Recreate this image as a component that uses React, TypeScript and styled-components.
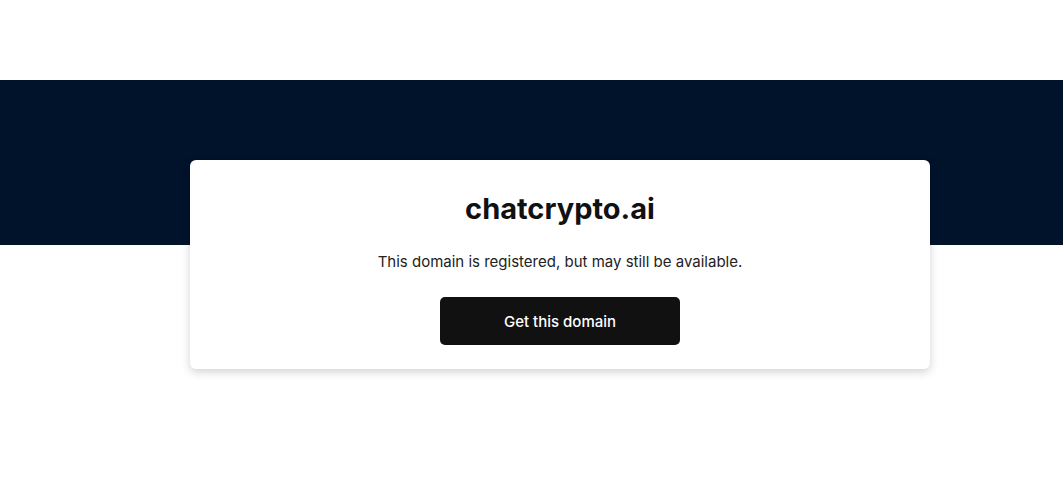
import styled, { createGlobalStyle } from 'styled-components'

const GlobalStyle = createGlobalStyle`
  html, body {
    margin: 0;
    padding: 0;
    background: #fff;
    font-family: Inter, "Noto Sans", sans-serif;
    color: #111;
  }
`

// white header strip, dark hero band, then white again; card sits over the band edge
const Page = styled.main`
  min-height: 485px;
  box-sizing: border-box;
  padding: 160px 0 40px 57px;
  background: linear-gradient(
    to bottom,
    #fff 0,
    #fff 80px,
    #00132b 80px,
    #00132b 245px,
    #fff 245px
  );
  display: flex;
  justify-content: center;
  align-items: flex-start;
`

const Card = styled.article`
  width: 740px;
  box-sizing: border-box;
  background: #fff;
  border-radius: 6px;
  padding: 29px 24px 24px;
  box-shadow: 0 3px 10px rgba(0, 0, 0, 0.18);
  display: flex;
  flex-direction: column;
  align-items: center;
  text-align: center;
`

const Title = styled.h1`
  margin: 0;
  font-size: 29px;
  line-height: 40px;
  font-weight: 700;
  color: #111;
`

const Subtitle = styled.p`
  margin: 22px 0 0;
  font-size: 15px;
  line-height: 22px;
  color: #222;
`

const Button = styled.a`
  margin-top: 24px;
  width: 240px;
  height: 48px;
  display: flex;
  align-items: center;
  justify-content: center;
  background: #111;
  color: #fff;
  border-radius: 5px;
  font-size: 15px;
  font-weight: 500;
  text-decoration: none;
  cursor: pointer;
`

export default function App() {
  return (
    <>
      <GlobalStyle />
      <Page>
        <Card>
          <Title>chatcrypto.ai</Title>
          <Subtitle>This domain is registered, but may still be available.</Subtitle>
          <Button>Get this domain</Button>
        </Card>
      </Page>
    </>
  )
}
